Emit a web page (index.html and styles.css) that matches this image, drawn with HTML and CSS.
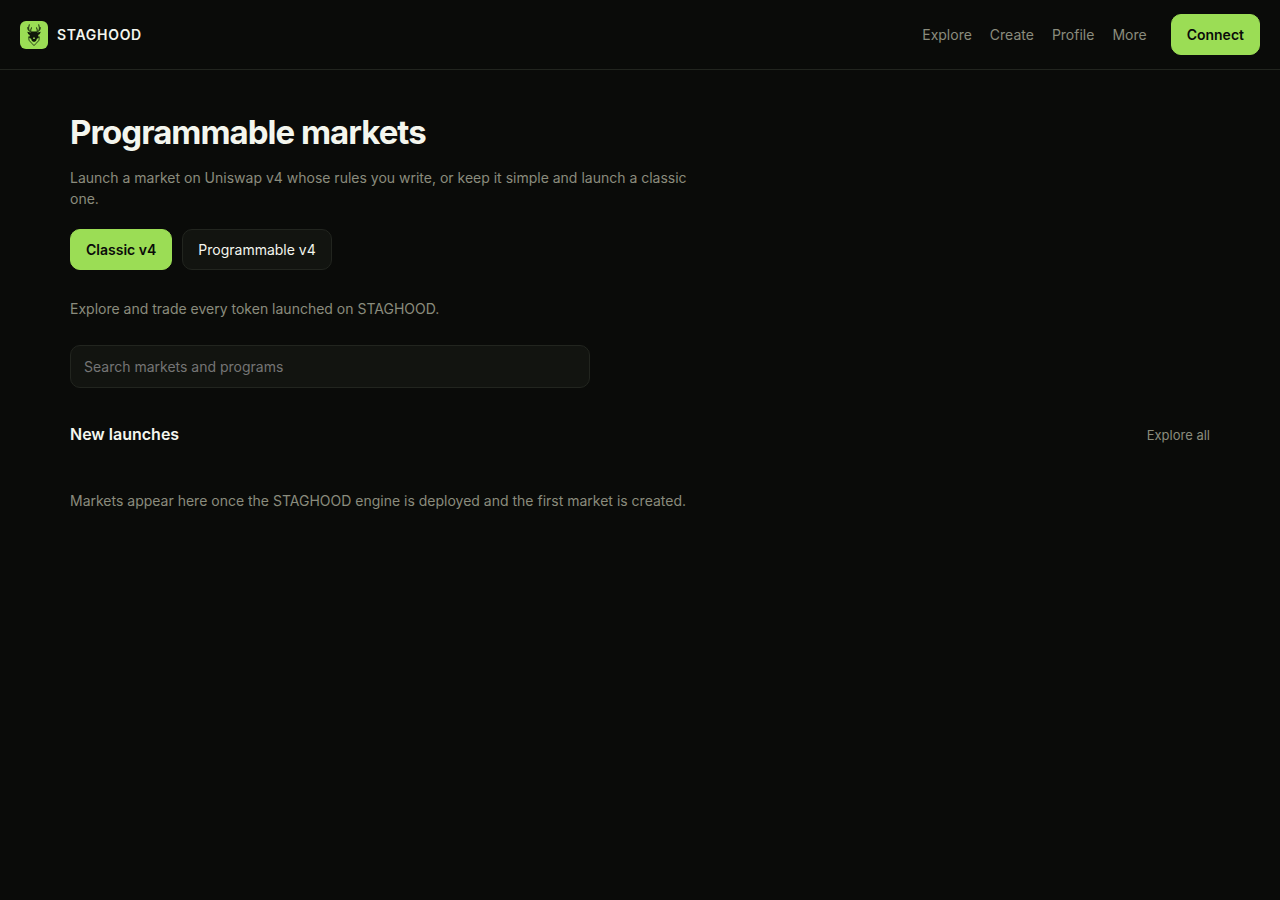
FILE: index.html
```
<!DOCTYPE html>
<html lang="en">
<head>
    <meta charset="utf-8">
    <meta name="viewport" content="width=device-width, initial-scale=1">
    <title>STAGHOOD</title>
    <link rel="stylesheet" href="styles.css">
</head>
<body>

<header class="topbar">
    <a href="#" class="brand">
        <svg class="logo" viewBox="0 0 28 28" aria-hidden="true">
            <rect width="28" height="28" rx="6" fill="#9bdd55"/>
            <!-- antlers -->
            <g fill="none" stroke="#294317" stroke-width="1.1" stroke-linecap="round">
                <path d="M12.4 11.6C9.6 10.6 7.6 9 7.7 6.6M9 9.4C8.4 7.4 8.6 5.4 9.3 3.8M10.8 10.6C10.5 8.8 10.9 7.6 11.5 6.8"/>
                <path d="M15.6 11.6C18.4 10.6 20.4 9 20.3 6.6M19 9.4C19.6 7.4 19.4 5.4 18.7 3.8M17.2 10.6C17.5 8.8 17.1 7.6 16.5 6.8"/>
            </g>
            <!-- head -->
            <path fill="#10180a" d="M12 10.5h4l1.5 1 3.3-.7-1.2 2.4-1.5.8.9 2.7-2.1 1-.9 2.3-2 1-2-1-.9-2.3-2.1-1 .9-2.7-1.5-.8-1.2-2.4 3.3.7z"/>
            <path fill="none" stroke="#294317" stroke-width="1" d="M8.7 15.5l.3 3.7 2.2 2.6 2.8 2.7 2.8-2.7 2.2-2.6.3-3.7"/>
            <path fill="#9bdd55" d="M13.2 16.5h1.6v1.6h-1.6z"/>
        </svg>
        <span>STAGHOOD</span>
    </a>
    <nav class="nav">
        <a href="#">Explore</a>
        <a href="#">Create</a>
        <a href="#">Profile</a>
        <a href="#">More</a>
    </nav>
    <button type="button" class="btn btn-primary">Connect</button>
</header>

<main class="page">
    <h1>Programmable markets</h1>
    <p class="lead">Launch a market on Uniswap v4 whose rules you write, or keep it simple and launch a classic one.</p>

    <div class="modes">
        <button type="button" class="btn btn-primary">Classic v4</button>
        <button type="button" class="btn">Programmable v4</button>
    </div>

    <p class="intro">Explore and trade every token launched on STAGHOOD.</p>

    <input class="search" type="search" placeholder="Search markets and programs" aria-label="Search markets and programs">

    <div class="section-head">
        <h2>New launches</h2>
        <a href="#">Explore all</a>
    </div>
    <p class="empty">Markets appear here once the STAGHOOD engine is deployed and the first market is created.</p>
</main>

</body>
</html>
```
FILE: styles.css
```
* {
    box-sizing: border-box;
}

body {
    margin: 0;
    min-height: 100vh;
    background: #0a0b09;
    color: #f4f6ee;
    font-family: Inter, "Liberation Sans", sans-serif;
    font-size: 14px;
    line-height: 21px;
}

h1, h2, p {
    margin: 0;
}

a {
    color: #8a8c7d;
    text-decoration: none;
}

a:hover {
    color: #f4f6ee;
}

.topbar {
    display: flex;
    align-items: center;
    padding: 14px 20px;
    border-bottom: 1px solid #22251f;
}

.brand {
    display: flex;
    align-items: center;
    gap: 9px;
    color: #f4f6ee;
    font-weight: 600;
    letter-spacing: 0.05em;
}

.logo {
    width: 28px;
    height: 28px;
}

.nav {
    display: flex;
    gap: 18px;
    margin-left: auto;
    margin-right: 24px;
}

.btn {
    padding: 9px 15px;
    border: 1px solid #22251f;
    border-radius: 10px;
    background: #121410;
    color: #f4f6ee;
    font: inherit;
    cursor: pointer;
}

.btn-primary {
    border-color: #9bdd55;
    background: #9bdd55;
    color: #0a0b09;
    font-weight: 600;
}

.page {
    max-width: 1180px;
    margin: 0 auto;
    padding: 42px 20px;
}

h1 {
    font-size: 33px;
    line-height: 40px;
    font-weight: 700;
    letter-spacing: -0.03em;
}

.lead {
    max-width: 620px;
    margin-top: 15px;
}

.lead, .intro, .empty {
    color: #8a8c7d;
}

.modes {
    display: flex;
    gap: 10px;
    margin-top: 20px;
}

.intro {
    margin-top: 28px;
}

.search {
    display: block;
    width: 100%;
    max-width: 520px;
    margin-top: 26px;
    padding: 10px 13px;
    border: 1px solid #22251f;
    border-radius: 10px;
    background: #121410;
    color: #f4f6ee;
    font: inherit;
    appearance: none;
}

.search::placeholder {
    color: #757575;
}

.section-head {
    display: flex;
    align-items: baseline;
    justify-content: space-between;
    margin-top: 34px;
}

h2 {
    font-size: 16px;
    line-height: 24px;
    font-weight: 600;
}

.section-head a {
    font-size: 13px;
}

.empty {
    margin-top: 44px;
}
```
